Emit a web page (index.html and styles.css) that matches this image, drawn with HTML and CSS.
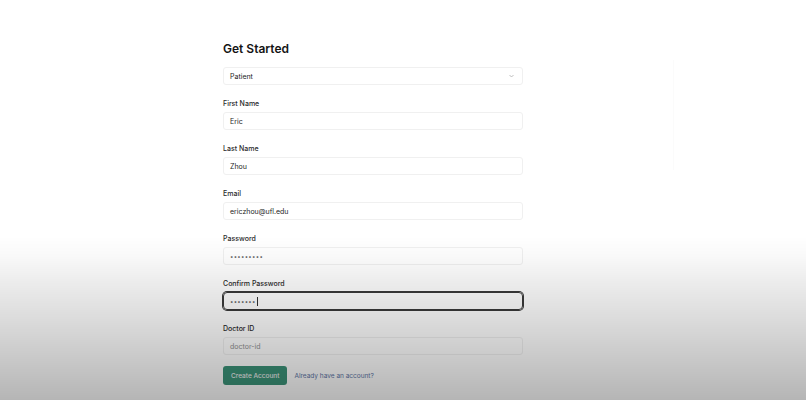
FILE: index.html
```html
<!DOCTYPE html>
<html lang="en">
<head>
<meta charset="utf-8">
<title>Get Started</title>
<link rel="stylesheet" href="styles.css">
</head>
<body>
<div class="page">
  <form class="form">
    <h1 class="title">Get Started</h1>
    <div class="input select">
      <span>Patient</span>
      <svg class="chev" width="5" height="4" viewBox="0 0 5 4"><polyline points="0.5,1 2.5,3 4.5,1" fill="none" stroke="#a5a5a5" stroke-width="0.7"/></svg>
    </div>
    <div class="field">
      <div class="label">First Name</div>
      <div class="input">Eric</div>
    </div>
    <div class="field">
      <div class="label">Last Name</div>
      <div class="input">Zhou</div>
    </div>
    <div class="field">
      <div class="label">Email</div>
      <div class="input">ericzhou@ufl.edu</div>
    </div>
    <div class="field">
      <div class="label">Password</div>
      <div class="input dots">•••••••••</div>
    </div>
    <div class="field">
      <div class="label">Confirm Password</div>
      <div class="input dots focused">•••••••<span class="caret"></span></div>
    </div>
    <div class="field">
      <div class="label">Doctor ID</div>
      <div class="input placeholder">doctor-id</div>
    </div>
    <div class="actions">
      <button type="button" class="btn">Create Account</button>
      <a class="link" href="#">Already have an account?</a>
    </div>
  </form>
  <div class="aside"></div>
</div>
</body>
</html>
```

FILE: styles.css
```css
html, body {
  margin: 0;
  padding: 0;
  background: #ffffff;
  height: 400px;
  overflow: hidden;
  font-family: Inter, "Liberation Sans", sans-serif;
  color: #111111;
}

body::after {
  content: "";
  position: fixed;
  left: 0;
  top: 0;
  right: 0;
  bottom: 0;
  pointer-events: none;
  background: linear-gradient(to bottom,
    rgba(0,0,0,0) 0%,
    rgba(0,0,0,0) 59%,
    rgba(0,0,0,0.025) 64%,
    rgba(0,0,0,0.07) 70%,
    rgba(0,0,0,0.14) 80%,
    rgba(0,0,0,0.215) 90%,
    rgba(0,0,0,0.29) 100%);
}

.page {
  display: flex;
  padding: 41px 0 0 223px;
}

.form {
  width: 300px;
  display: flex;
  flex-direction: column;
  margin: 0;
}

.title {
  margin: 0 0 10px 0;
  font-size: 12px;
  line-height: 16px;
  font-weight: 600;
  color: #141414;
}

.field {
  display: flex;
  flex-direction: column;
  gap: 3px;
  margin-top: 14px;
}

.label {
  font-size: 7px;
  line-height: 10px;
  font-weight: 500;
  color: #2a2a2a;
}

.input {
  box-sizing: border-box;
  height: 18px;
  border: 1px solid #f0f0f0;
  border-radius: 3px;
  padding: 0 6px;
  display: flex;
  align-items: center;
  font-size: 7px;
  color: #1c1c1c;
  background: transparent;
}

.select {
  justify-content: space-between;
  padding-right: 8px;
}

.chev {
  display: block;
}

.dots {
  font-size: 6px;
  letter-spacing: 0.3px;
  color: #5a5a5a;
}

.focused {
  border: 1px solid #3a3a3a;
  box-shadow: 0 0 0 1px #3a3a3a;
  border-radius: 4px;
}

.caret {
  display: inline-block;
  width: 1px;
  height: 9px;
  background: #333333;
  margin-left: 1px;
}

.placeholder {
  color: #909090;
}

.actions {
  display: flex;
  align-items: center;
  gap: 7px;
  margin-top: 11px;
}

.btn {
  height: 19px;
  padding: 0 8px;
  border: none;
  border-radius: 3px;
  background: #3c9479;
  color: #f0f0f0;
  font-family: inherit;
  font-size: 6.5px;
  font-weight: 500;
}

.link {
  font-size: 6.5px;
  color: #5d76a6;
  text-decoration: none;
}

.aside {
  margin-left: 150px;
  margin-top: 19px;
  width: 0;
  height: 110px;
  border-left: 1px solid #fbfbfb;
}
```
